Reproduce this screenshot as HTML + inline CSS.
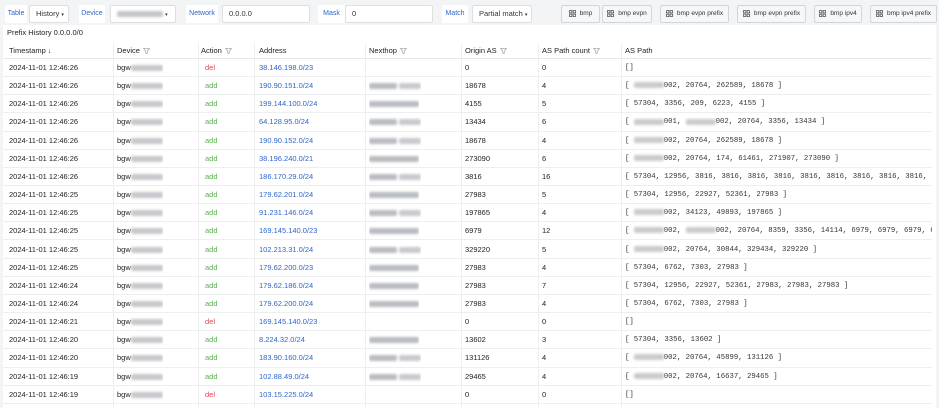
<!DOCTYPE html>
<html><head><meta charset="utf-8"><style>
*{margin:0;padding:0;box-sizing:border-box}
body{width:939px;height:408px;overflow:hidden;background:#f3f4f5;font-family:"Liberation Sans",sans-serif;font-size:7.5px;color:#222;position:relative}
.a{position:absolute}
.lbl{position:absolute;top:5px;height:18px;background:#fff;border-radius:2px;color:#2f66c9;font-size:7px;line-height:18px;text-align:center}
.box{position:absolute;top:5px;height:18px;background:#fff;border:1px solid #dcdfe3;border-radius:2px;font-size:7.5px;line-height:16px;padding-left:6px;color:#333}
.btn{position:absolute;top:5px;height:18px;background:#f6f7f8;border:1px solid #d2d5d9;border-radius:2px;font-size:6.5px;line-height:16px;color:#333;text-align:center}
.btn svg{vertical-align:-2px;margin-right:4px}
.panel{position:absolute;left:3px;top:25px;width:933px;height:383px;background:#fff}
.row{position:absolute;left:3px;width:929px;height:18.15px;border-bottom:1px solid #eceef0}
.c{position:absolute;top:0;height:100%;line-height:18px;white-space:nowrap;overflow:hidden}
.vl{position:absolute;top:43px;height:365px;width:1px;background:#eceef0}
.del{color:#e0445a}.add{color:#5aae4e}.ad{color:#2f66c9}
.m{font-family:"Liberation Mono",monospace;font-size:7.3px;color:#333}
.bl{display:inline-block;height:6px;background:#b9bcc0;filter:blur(1.3px);vertical-align:middle;border-radius:2px}
.hd{font-size:7.5px;color:#222}
.f{display:inline-block;width:7px;height:6px;margin-left:3px;vertical-align:-1px}
</style></head><body>
<div class="lbl" style="left:5px;width:22px">Table</div>
<div class="box" style="left:29px;width:40px">History <span style="font-size:5px">▾</span></div>
<div class="lbl" style="left:79px;width:26px">Device</div>
<div class="box" style="left:110px;width:66px"><span class="bl" style="width:46px;background:#c4c6c9"></span> <span style="font-size:5px">▾</span></div>
<div class="lbl" style="left:186px;width:32px">Network</div>
<div class="box" style="left:222px;width:88px">0.0.0.0</div>
<div class="lbl" style="left:318px;width:27px">Mask</div>
<div class="box" style="left:345px;width:88px">0</div>
<div class="lbl" style="left:442px;width:26px">Match</div>
<div class="box" style="left:472px;width:60px">Partial match <span style="font-size:5px">▾</span></div>
<div id="btns"></div>
<div class="panel"></div>
<div class="a" style="left:7px;top:28px;font-size:7.5px;color:#222">Prefix History 0.0.0.0/0</div>
<div id="tbl"></div>
<script>
var F='<svg class="f" viewBox="0 0 8 7"><path d="M0.5 0.5h7L4.8 3.8v2.7L3.2 6V3.8z" fill="none" stroke="#999" stroke-width="0.7"/></svg>';
var G='<svg width="7" height="7" viewBox="0 0 7 7"><g fill="none" stroke="#444" stroke-width="0.7"><rect x="0.5" y="0.5" width="2.4" height="2.4"/><rect x="4.1" y="0.5" width="2.4" height="2.4"/><rect x="0.5" y="4.1" width="2.4" height="2.4"/><rect x="4.1" y="4.1" width="2.4" height="2.4"/></g></svg>';
var bt=[[561,39,'bmp'],[602,50,'bmp evpn'],[660,69,'bmp evpn prefix'],[737,69,'bmp evpn prefix'],[814,48,'bmp ipv4'],[870,67,'bmp ipv4 prefix']];
var h='';bt.forEach(function(b){h+='<div class="btn" style="left:'+b[0]+'px;width:'+b[1]+'px">'+G+b[2]+'</div>'});
document.getElementById('btns').innerHTML=h;
var X='<span class="bl" style="width:30px;background:#c9cbce"></span>';
var rows=[
['12:46:26','del','38.146.198.0/23',0,'0','0','[]'],
['12:46:26','add','190.90.151.0/24',1,'18678','4','[ '+X+'002, 20764, 262589, 18678 ]'],
['12:46:26','add','199.144.100.0/24',2,'4155','5','[ 57304, 3356, 209, 6223, 4155 ]'],
['12:46:26','add','64.128.95.0/24',1,'13434','6','[ '+X+'001, '+X+'002, 20764, 3356, 13434 ]'],
['12:46:26','add','190.90.152.0/24',1,'18678','4','[ '+X+'002, 20764, 262589, 18678 ]'],
['12:46:26','add','38.196.240.0/21',2,'273090','6','[ '+X+'002, 20764, 174, 61461, 271907, 273090 ]'],
['12:46:26','add','186.170.29.0/24',1,'3816','16','[ 57304, 12956, 3816, 3816, 3816, 3816, 3816, 3816, 3816, 3816, 3816, 3816, 3816 ]'],
['12:46:25','add','179.62.201.0/24',2,'27983','5','[ 57304, 12956, 22927, 52361, 27983 ]'],
['12:46:25','add','91.231.146.0/24',1,'197865','4','[ '+X+'002, 34123, 49893, 197865 ]'],
['12:46:25','add','169.145.140.0/23',2,'6979','12','[ '+X+'002, '+X+'002, 20764, 8359, 3356, 14114, 6979, 6979, 6979, 6979 ]'],
['12:46:25','add','102.213.31.0/24',1,'329220','5','[ '+X+'002, 20764, 30844, 329434, 329220 ]'],
['12:46:25','add','179.62.200.0/23',2,'27983','4','[ 57304, 6762, 7303, 27983 ]'],
['12:46:24','add','179.62.186.0/24',2,'27983','7','[ 57304, 12956, 22927, 52361, 27983, 27983, 27983 ]'],
['12:46:24','add','179.62.200.0/24',2,'27983','4','[ 57304, 6762, 7303, 27983 ]'],
['12:46:21','del','169.145.140.0/23',0,'0','0','[]'],
['12:46:20','add','8.224.32.0/24',2,'13602','3','[ 57304, 3356, 13602 ]'],
['12:46:20','add','183.90.160.0/24',1,'131126','4','[ '+X+'002, 20764, 45899, 131126 ]'],
['12:46:19','add','102.88.49.0/24',1,'29465','4','[ '+X+'002, 20764, 16637, 29465 ]'],
['12:46:19','del','103.15.225.0/24',0,'0','0','[]']];
var s='<div class="row" style="top:43px;height:16px;border-bottom:1px solid #e4e6e9"><div class="c hd" style="left:6px;line-height:16px">Timestamp <span style="font-size:7px">↓</span></div><div class="c hd" style="left:114px;line-height:16px">Device'+F+'</div><div class="c hd" style="left:198px;line-height:16px">Action'+F+'</div><div class="c hd" style="left:256px;line-height:16px">Address</div><div class="c hd" style="left:366px;line-height:16px">Nexthop'+F+'</div><div class="c hd" style="left:462px;line-height:16px">Origin AS'+F+'</div><div class="c hd" style="left:539px;line-height:16px">AS Path count'+F+'</div><div class="c hd" style="left:622px;line-height:16px">AS Path</div></div>';
[113,198,254,365,461,538,621].forEach(function(x){s+='<div class="vl" style="left:'+x+'px"></div>'});
rows.forEach(function(r,i){
 var t=59+i*18.15;
 var nh=r[3]==0?'':(r[3]==1?'<span class="bl" style="width:28px"></span> <span class="bl" style="width:22px;background:#c8cacd"></span>':'<span class="bl" style="width:50px"></span>');
 s+='<div class="row" style="top:'+t+'px"><div class="c" style="left:6px">2024-11-01 '+r[0]+'</div><div class="c" style="left:114px">bgw<span class="bl" style="width:32px;background:#c6c8cb"></span></div><div class="c '+r[1]+'" style="left:202px">'+r[1]+'</div><div class="c ad" style="left:256px">'+r[2]+'</div><div class="c" style="left:366px">'+nh+'</div><div class="c" style="left:462px">'+r[4]+'</div><div class="c" style="left:539px">'+r[5]+'</div><div class="c m" style="left:622px;width:307px">'+r[6]+'</div></div>';
});
document.getElementById('tbl').innerHTML=s;
</script>
</body></html>
